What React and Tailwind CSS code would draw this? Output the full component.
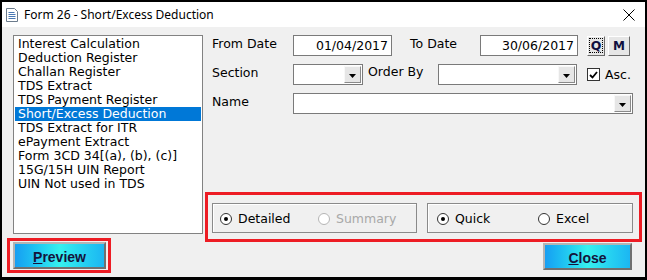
import React from "react";

const items = [
  "Interest Calculation",
  "Deduction Register",
  "Challan Register",
  "TDS Extract",
  "TDS Payment Register",
  "Short/Excess Deduction",
  "TDS Extract for ITR",
  "ePayment Extract",
  "Form 3CD 34[(a), (b), (c)]",
  "15G/15H UIN Report",
  "UIN Not used in TDS",
];

function Combo({ w }) {
  return (
    <div className={`${w} h-[21px] border border-[#7a7a7a] bg-white flex justify-end p-px`}>
      <div className="w-[17px] h-full bg-[#e6e6e6] border border-t-[#f8f8f8] border-l-[#f8f8f8] border-b-[#8a8a8a] border-r-[#8a8a8a] flex items-center justify-center pt-[3px]">
        <svg width="7" height="4" viewBox="0 0 7 4">
          <path d="M0 0h7L3.5 4z" fill="#000" />
        </svg>
      </div>
    </div>
  );
}

function Radio({ checked, disabled, label, w }) {
  return (
    <div className={`${w} flex items-center gap-[6px]`}>
      <div
        className={`w-[12px] h-[12px] rounded-full border bg-white flex items-center justify-center ${
          disabled ? "border-[#b5b5b5]" : "border-[#333]"
        }`}
      >
        {checked && <div className="w-[4px] h-[4px] rounded-full bg-black" />}
      </div>
      <span className={disabled ? "text-[#a8a8a8]" : "text-black"}>{label}</span>
    </div>
  );
}

function BigButton({ first, rest, w }) {
  return (
    <div
      className={`${w} h-[27px] border-2 border-t-[#b4b4b4] border-l-[#b4b4b4] border-b-[#707070] border-r-[#707070] bg-linear-to-r from-[#189ef2] via-[#36f0ee] to-[#1cb6f2] flex items-center justify-center pt-[3px] text-[14px] font-bold text-[#14143c]`}
      style={{ fontFamily: '"Liberation Sans", Arial, sans-serif' }}
    >
      <span>
        <span className="underline">{first}</span>
        {rest}
      </span>
    </div>
  );
}

export default function App() {
  return (
    <div
      className="w-[647px] h-[280px] bg-black pt-[2px] px-[2px] pb-[3px] flex flex-col text-[12.5px] leading-[14px]"
      style={{ fontFamily: '"DejaVu Sans", Verdana, sans-serif' }}
    >
      {/* title bar */}
      <div className="h-[25px] bg-white flex items-center pl-[4px] pr-[10px]">
        <svg width="12" height="14" viewBox="0 0 12 14" className="mt-[1px]">
          <path d="M0.5 0.5h8l3 3v10h-11z" fill="#fff" stroke="#6b7b8c" />
          <path d="M2.5 4.5h6M2.5 6.5h7M2.5 8.5h7M2.5 10.5h7" stroke="#4a79b5" />
        </svg>
        <span
          className="ml-[6px] text-[12px] text-black"
          style={{ fontFamily: '"Noto Sans", "Open Sans", sans-serif' }}
        >
          Form 26 - Short/Excess Deduction
        </span>
        <svg width="12" height="12" viewBox="0 0 12 12" className="ml-auto">
          <path d="M0.5 0.5l11 11M11.5 0.5l-11 11" stroke="#000" strokeWidth="1" />
        </svg>
      </div>

      {/* body */}
      <div className="flex-1 bg-[#f0f0f0] flex">
        {/* left column */}
        <div className="w-[203px] flex flex-col pt-[8px] pl-[5px]">
          <div className="ml-[6px] w-[190px] h-[199px] border border-[#828282] bg-white pt-[1px] px-px">
            {items.map((t) => (
              <div
                key={t}
                className={`h-[14px] pl-[3px] whitespace-nowrap ${
                  t === "Short/Excess Deduction" ? "bg-[#0078d7] text-white" : "text-black"
                }`}
              >
                {t}
              </div>
            ))}
          </div>
          <div className="mt-[4px] w-[104px] h-[35px] border-[3px] border-[#ed1c24] flex items-center pl-[3px]">
            <BigButton first="P" rest="review" w="w-[93px]" />
          </div>
        </div>

        {/* right column */}
        <div className="flex-1 flex flex-col pt-[8px]">
          <div className="pl-[7px] flex flex-col gap-[8px]">
            <div className="flex items-center h-[21px]">
              <span className="w-[81px] self-start pt-[2px]">From Date</span>
              <div className="w-[99px] h-[21px] border border-[#7a7a7a] bg-white text-right pr-[3px] pt-[3px]">
                01/04/2017
              </div>
              <span className="w-[88px] pl-[18px] self-start pt-[2px]">To Date</span>
              <div className="w-[98px] h-[21px] border border-[#7a7a7a] bg-white text-right pr-[3px] pt-[3px]">
                30/06/2017
              </div>
              <div className="ml-[9px] w-[18px] h-[20px] border border-t-white border-l-white border-b-[#6a6a6a] border-r-[#6a6a6a] bg-[#e6e6e6] flex items-center justify-center">
                <div className="border border-dotted border-black px-[1px] leading-[13px] font-bold text-[#101040]">
                  Q
                </div>
              </div>
              <div className="ml-[3px] w-[22px] h-[20px] border border-t-white border-l-white border-b-[#6a6a6a] border-r-[#6a6a6a] bg-[#e6e6e6] flex items-center justify-center font-bold text-[#101040] text-[12px]">
                M
              </div>
            </div>

            <div className="flex items-center h-[21px]">
              <span className="w-[81px] self-start pt-[2px]">Section</span>
              <Combo w="w-[70px]" />
              <span className="w-[75px] pl-[5px] self-start pt-px">Order By</span>
              <Combo w="w-[139px]" />
              <div className="ml-[10px] w-[13px] h-[13px] border border-[#333] bg-white flex items-center justify-center">
                <svg width="9" height="8" viewBox="0 0 9 8">
                  <path d="M1 4l2.5 2.5L8 1" stroke="#000" strokeWidth="1.8" fill="none" />
                </svg>
              </div>
              <span className="ml-[5px]">Asc.</span>
            </div>

            <div className="flex items-center h-[21px]">
              <span className="w-[81px] self-start pt-[2px]">Name</span>
              <Combo w="w-[340px]" />
            </div>
          </div>

          <div className="mt-[78px] w-[437px] h-[50px] border-[3px] border-[#ed1c24] flex pl-[4px] pt-[8px] gap-[10px]">
            <div className="w-[205px] h-[30px] border border-[#8a8a8a] shadow-[inset_1px_1px_0_#fff] flex items-center pl-[7px] pt-[2px]">
              <Radio checked label="Detailed" w="w-[98px]" />
              <Radio disabled label="Summary" />
            </div>
            <div className="w-[206px] h-[30px] border border-[#8a8a8a] shadow-[inset_1px_1px_0_#fff] flex items-center pl-[9px] pt-[2px]">
              <Radio checked label="Quick" w="w-[101px]" />
              <Radio label="Excel" />
            </div>
          </div>

          <div className="self-end mr-[13px] mt-px">
            <BigButton first="C" rest="lose" w="w-[89px] h-[26px]" />
          </div>
        </div>
      </div>
    </div>
  );
}
